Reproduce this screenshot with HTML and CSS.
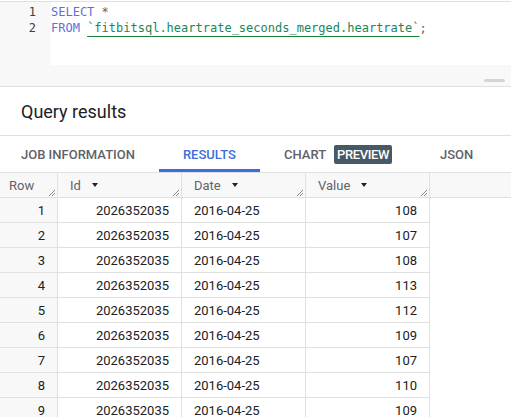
FILE: index.html
```html
<!DOCTYPE html>
<html>
<head>
<meta charset="utf-8">
<link rel="stylesheet" href="styles.css">
</head>
<body>
<div class="editor">
  <div class="editor-main">
    <div class="gutter">
      <div class="ln">1</div>
      <div class="ln">2</div>
    </div>
    <div class="code">
      <div class="line"><span class="kw">SELECT</span> <span class="op">*</span></div>
      <div class="line"><span class="kw">FROM</span> <span class="str">`fitbitsql.heartrate_seconds_merged.heartrate`</span><span class="op">;</span></div>
    </div>
  </div>
  <div class="editor-foot"><span class="thumb"></span></div>
</div>

<div class="title">Query results</div>

<div class="tabs">
  <div class="tab">JOB INFORMATION</div>
  <div class="tab active">RESULTS</div>
  <div class="tab">CHART <span class="badge">PREVIEW</span></div>
  <div class="tab">JSON</div>
</div>

<div class="grid">
  <div class="hrow">
    <div class="hc rowc">Row<svg class="rz" width="7" height="7" viewBox="0 0 7 7"><path d="M1 7L7 1M4 7L7 4" stroke="#80868b" stroke-width="1"/></svg></div>
    <div class="hc">Id<span class="arrow"></span><svg class="rz" width="7" height="7" viewBox="0 0 7 7"><path d="M1 7L7 1M4 7L7 4" stroke="#80868b" stroke-width="1"/></svg></div>
    <div class="hc">Date<span class="arrow"></span><svg class="rz" width="7" height="7" viewBox="0 0 7 7"><path d="M1 7L7 1M4 7L7 4" stroke="#80868b" stroke-width="1"/></svg></div>
    <div class="hc">Value<span class="arrow"></span><svg class="rz" width="7" height="7" viewBox="0 0 7 7"><path d="M1 7L7 1M4 7L7 4" stroke="#80868b" stroke-width="1"/></svg></div>
  </div>
  <div class="drow"><div class="c num">1</div><div class="c r">2026352035</div><div class="c">2016-04-25</div><div class="c r">108</div></div>
  <div class="drow"><div class="c num">2</div><div class="c r">2026352035</div><div class="c">2016-04-25</div><div class="c r">107</div></div>
  <div class="drow"><div class="c num">3</div><div class="c r">2026352035</div><div class="c">2016-04-25</div><div class="c r">108</div></div>
  <div class="drow"><div class="c num">4</div><div class="c r">2026352035</div><div class="c">2016-04-25</div><div class="c r">113</div></div>
  <div class="drow"><div class="c num">5</div><div class="c r">2026352035</div><div class="c">2016-04-25</div><div class="c r">112</div></div>
  <div class="drow"><div class="c num">6</div><div class="c r">2026352035</div><div class="c">2016-04-25</div><div class="c r">109</div></div>
  <div class="drow"><div class="c num">7</div><div class="c r">2026352035</div><div class="c">2016-04-25</div><div class="c r">107</div></div>
  <div class="drow"><div class="c num">8</div><div class="c r">2026352035</div><div class="c">2016-04-25</div><div class="c r">110</div></div>
  <div class="drow"><div class="c num">9</div><div class="c r">2026352035</div><div class="c">2016-04-25</div><div class="c r">109</div></div>
</div>
</body>
</html>
```

FILE: styles.css
```css
html, body {
  margin: 0;
  padding: 0;
  background: #fff;
  font-family: Roboto, "Liberation Sans", sans-serif;
  overflow: hidden;
}

.editor {
  margin-top: 1px;
  border-top: 1px solid #e0e0e0;
  border-bottom: 1px solid #e0e0e0;
  background: #f8f8f8;
}

.editor-main {
  display: flex;
  height: 63px;
}

.gutter {
  width: 51px;
  box-sizing: border-box;
  padding-top: 2px;
  padding-right: 15px;
  text-align: right;
  font-family: "DejaVu Sans Mono", "Liberation Mono", monospace;
  font-size: 12px;
  line-height: 16px;
  color: #3c4043;
}

.code {
  flex: 1;
  background: #fff;
  padding-top: 2px;
  font-family: "DejaVu Sans Mono", "Liberation Mono", monospace;
  font-size: 12px;
  line-height: 16px;
}

.line { white-space: pre; }

.kw { color: #5f6fdc; }
.op { color: #5f6368; }
.str {
  color: #17875a;
  text-decoration: underline;
  text-decoration-color: #188038;
  text-underline-offset: 4px;
}

.editor-foot {
  height: 21px;
  display: flex;
  justify-content: flex-end;
  align-items: flex-end;
  padding-right: 6px;
  padding-bottom: 4px;
  box-sizing: border-box;
}

.thumb {
  width: 21px;
  height: 3px;
  border-radius: 2px;
  background: #d5d5d5;
}

.title {
  height: 48px;
  display: flex;
  align-items: center;
  padding-left: 21px;
  font-size: 18px;
  color: #202124;
  border-bottom: 1px solid #e0e0e0;
}

.tabs {
  display: flex;
  height: 36px;
  margin-left: -3px;
}

.tab {
  display: flex;
  align-items: center;
  padding: 0 24px;
  font-size: 13px;
  font-weight: 500;
  color: #5f6368;
  box-sizing: border-box;
}

.tab.active {
  color: #3b6ed9;
  border-bottom: 3px solid #3b6ed9;
  padding-top: 3px;
}

.badge {
  margin-left: 8px;
  background: #455a64;
  color: #fff;
  border-radius: 2px;
  padding: 3px 3px;
  line-height: 13px;
  letter-spacing: -0.4px;
}

.grid {
  border-top: 1px solid #e0e0e0;
}

.hrow {
  display: flex;
  background: #f8f8f8;
  border-bottom: 1px solid #e0e0e0;
  height: 24px;
}

.hc {
  position: relative;
  box-sizing: border-box;
  width: 124px;
  border-right: 1px solid #e0e0e0;
  display: flex;
  align-items: center;
  padding-left: 12px;
  font-size: 13px;
  color: #5f6368;
}

.hc.rowc {
  width: 58px;
  padding-left: 9px;
}

.arrow {
  margin-left: 11px;
  width: 0;
  height: 0;
  border-left: 3.5px solid transparent;
  border-right: 3.5px solid transparent;
  border-top: 4px solid #202124;
}

.rz {
  position: absolute;
  right: 2px;
  bottom: 1px;
}

.drow {
  display: flex;
  height: 25px;
  box-sizing: border-box;
  border-bottom: 1px solid #e0e0e0;
  width: 430px;
}

.c {
  box-sizing: border-box;
  width: 124px;
  padding: 0 12px;
  border-right: 1px solid #e0e0e0;
  display: flex;
  align-items: center;
  font-size: 13px;
  color: #202124;
}

.c.r { justify-content: flex-end; }

.c.num {
  width: 58px;
  justify-content: flex-end;
  background: #f8f8f8;
}
```
